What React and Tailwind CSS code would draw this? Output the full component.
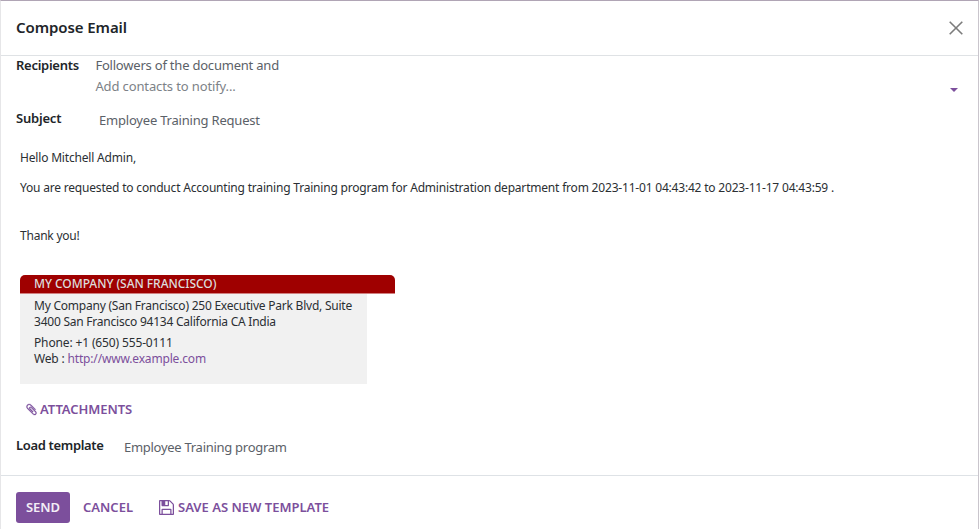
import React from "react";

function PaperclipIcon() {
  return (
    <svg viewBox="0 0 1792 1792" className="size-[13px]" fill="currentColor" stroke="currentColor" strokeWidth="40" aria-hidden="true">
      <path d="M1596 1385q0 117-79 196t-196 79q-135 0-235-100l-777-776q-113-115-113-271 0-159 110-270t269-111q158 0 273 113l605 606q10 10 10 22 0 16-30.5 46.5t-46.5 30.5q-13 0-23-10l-606-607q-79-77-181-77-106 0-179 75t-73 181q0 105 76 181l776 777q63 63 145 63 64 0 106-42t42-106q0-82-63-145l-581-581q-26-24-60-24-29 0-48 19t-19 48q0 32 25 59l410 410q10 10 10 22 0 16-31 47t-47 31q-12 0-22-10l-410-410q-63-61-63-149 0-82 57-139t139-57q88 0 149 63l581 581q100 98 100 235z" />
    </svg>
  );
}

function FloppyIcon() {
  return (
    <svg viewBox="0 128 1536 1536" className="size-[15px]" fill="currentColor" aria-hidden="true">
      <path d="M384 1536h768v-384h-768v384zm896 0h128v-896q0-14-10-38.5t-20-34.5l-281-281q-10-10-34-20t-39-10v416q0 40-28 68t-68 28h-576q-40 0-68-28t-28-68v-416h-128v1280h128v-416q0-40 28-68t68-28h832q40 0 68 28t28 68v416zm-384-928v-320q0-13-9.5-22.5t-22.5-9.5h-192q-13 0-22.5 9.5t-9.5 22.5v320q0 13 9.5 22.5t22.5 9.5h192q13 0 22.5-9.5t9.5-22.5zm640 32v928q0 40-28 68t-68 28h-1344q-40 0-68-28t-28-68v-1344q0-40 28-68t68-28h928q40 0 88 20t76 48l280 280q28 28 48 76t20 88z" />
    </svg>
  );
}

function Header() {
  return (
    <header className="flex h-[55px] items-center justify-between border-b border-[#dfe2e5] pr-[15px] pl-[15px]">
      <h1 className="pb-0.5 text-[15px] leading-5 font-semibold tracking-[-0.08px] text-[#212529]">Compose Email</h1>
      <button aria-label="Close" className="text-[#7c7c7c]">
        <svg viewBox="0 0 14 14" className="size-3.5" fill="none" stroke="currentColor" strokeWidth="1.6">
          <path d="M.7 .7l12.6 12.6M13.3 .7L.7 13.3" />
        </svg>
      </button>
    </header>
  );
}

function Message() {
  return (
    <section className="pt-5 pl-[19px] text-[12px] leading-4 tracking-[-0.23px] text-[#2b2f33]">
      <p className="tracking-[-0.18px]">Hello Mitchell Admin,</p>
      <p className="mt-[14px] tracking-[-0.195px]">
        You are requested to conduct Accounting training Training program for Administration department from 2023-11-01
        04:43:42 to 2023-11-17 04:43:59 .
      </p>
      <p className="mt-8">Thank you!</p>
      <div className="mt-[31px] h-[19px] w-[375px] rounded-t-[5px] border-b border-[#d08080] bg-[#9f0000] pl-3.5 text-[12px] leading-[18px] font-medium tracking-[-0.05px] text-[#dddddd]">
        MY COMPANY (SAN FRANCISCO)
      </div>
      <div className="h-[90px] w-[347px] bg-[#f1f1f1] pt-1 pl-3.5">
        <p>My Company (San Francisco) 250 Executive Park Blvd, Suite</p>
        <p>3400 San Francisco 94134 California CA India</p>
        <p className="mt-[5px] tracking-[-0.14px]">Phone: +1 (650) 555-0111</p>
        <p className="tracking-[-0.17px]">
          Web : <a className="text-[#7c4f9c]">http://www.example.com</a>
        </p>
      </div>
    </section>
  );
}

export default function App() {
  return (
    <div className="flex h-[529px] w-[979px] flex-col overflow-hidden border-t border-r border-l border-t-[#b0a5b5] border-r-[#c9c5cc] border-l-[#e6e6e8] bg-white font-['Noto_Sans',sans-serif] whitespace-nowrap">
      <Header />
      <main className="h-[419px] text-[13px] leading-5 text-[#5b6168]">
        <div className="-mt-px flex pl-[15px]">
          <div className="w-[79.4px] font-semibold tracking-[-0.28px] text-[#212529]">Recipients</div>
          <div className="flex-1">
            <div className="tracking-[-0.21px]">Followers of the document and</div>
            <div className="mt-px tracking-[-0.12px] text-[#7d8287]">Add contacts to notify...</div>
          </div>
          <svg viewBox="0 0 8 4" className="mt-[33px] mr-5 h-1 w-2 fill-[#7c4f9c]">
            <path d="M0 0h8L4 4z" />
          </svg>
        </div>
        <div className="flex pt-3 pl-[15px]">
          <div className="w-[83px] font-semibold tracking-[-0.2px] text-[#212529]">Subject</div>
          <div className="pt-0.5 tracking-[-0.2px]">Employee Training Request</div>
        </div>
        <Message />
        <button className="mt-[15px] ml-6 flex h-5 items-center gap-0.5 font-semibold tracking-[-0.05px] text-[#7c4f9c]">
          <PaperclipIcon />
          <span>ATTACHMENTS</span>
        </button>
        <div className="mt-4 flex pl-[15px]">
          <div className="w-[108px] font-semibold tracking-[-0.34px] text-[#212529]">Load template</div>
          <div className="pt-0.5 tracking-[-0.28px]">Employee Training program</div>
        </div>
      </main>
      <footer className="flex h-[54px] items-start border-t border-[#dee2e6] pt-4 pl-[15px] text-[13px] font-semibold text-[#7c4f9c]">
        <button className="h-[31px] w-[54px] rounded-[3px] bg-[#7c4f9c] text-[#f3eef6]">SEND</button>
        <button className="ml-[13px] h-[31px] w-[50px] text-left">CANCEL</button>
        <button className="ml-[26px] flex h-[31px] items-center gap-1">
          <FloppyIcon />
          <span>SAVE AS NEW TEMPLATE</span>
        </button>
      </footer>
    </div>
  );
}
